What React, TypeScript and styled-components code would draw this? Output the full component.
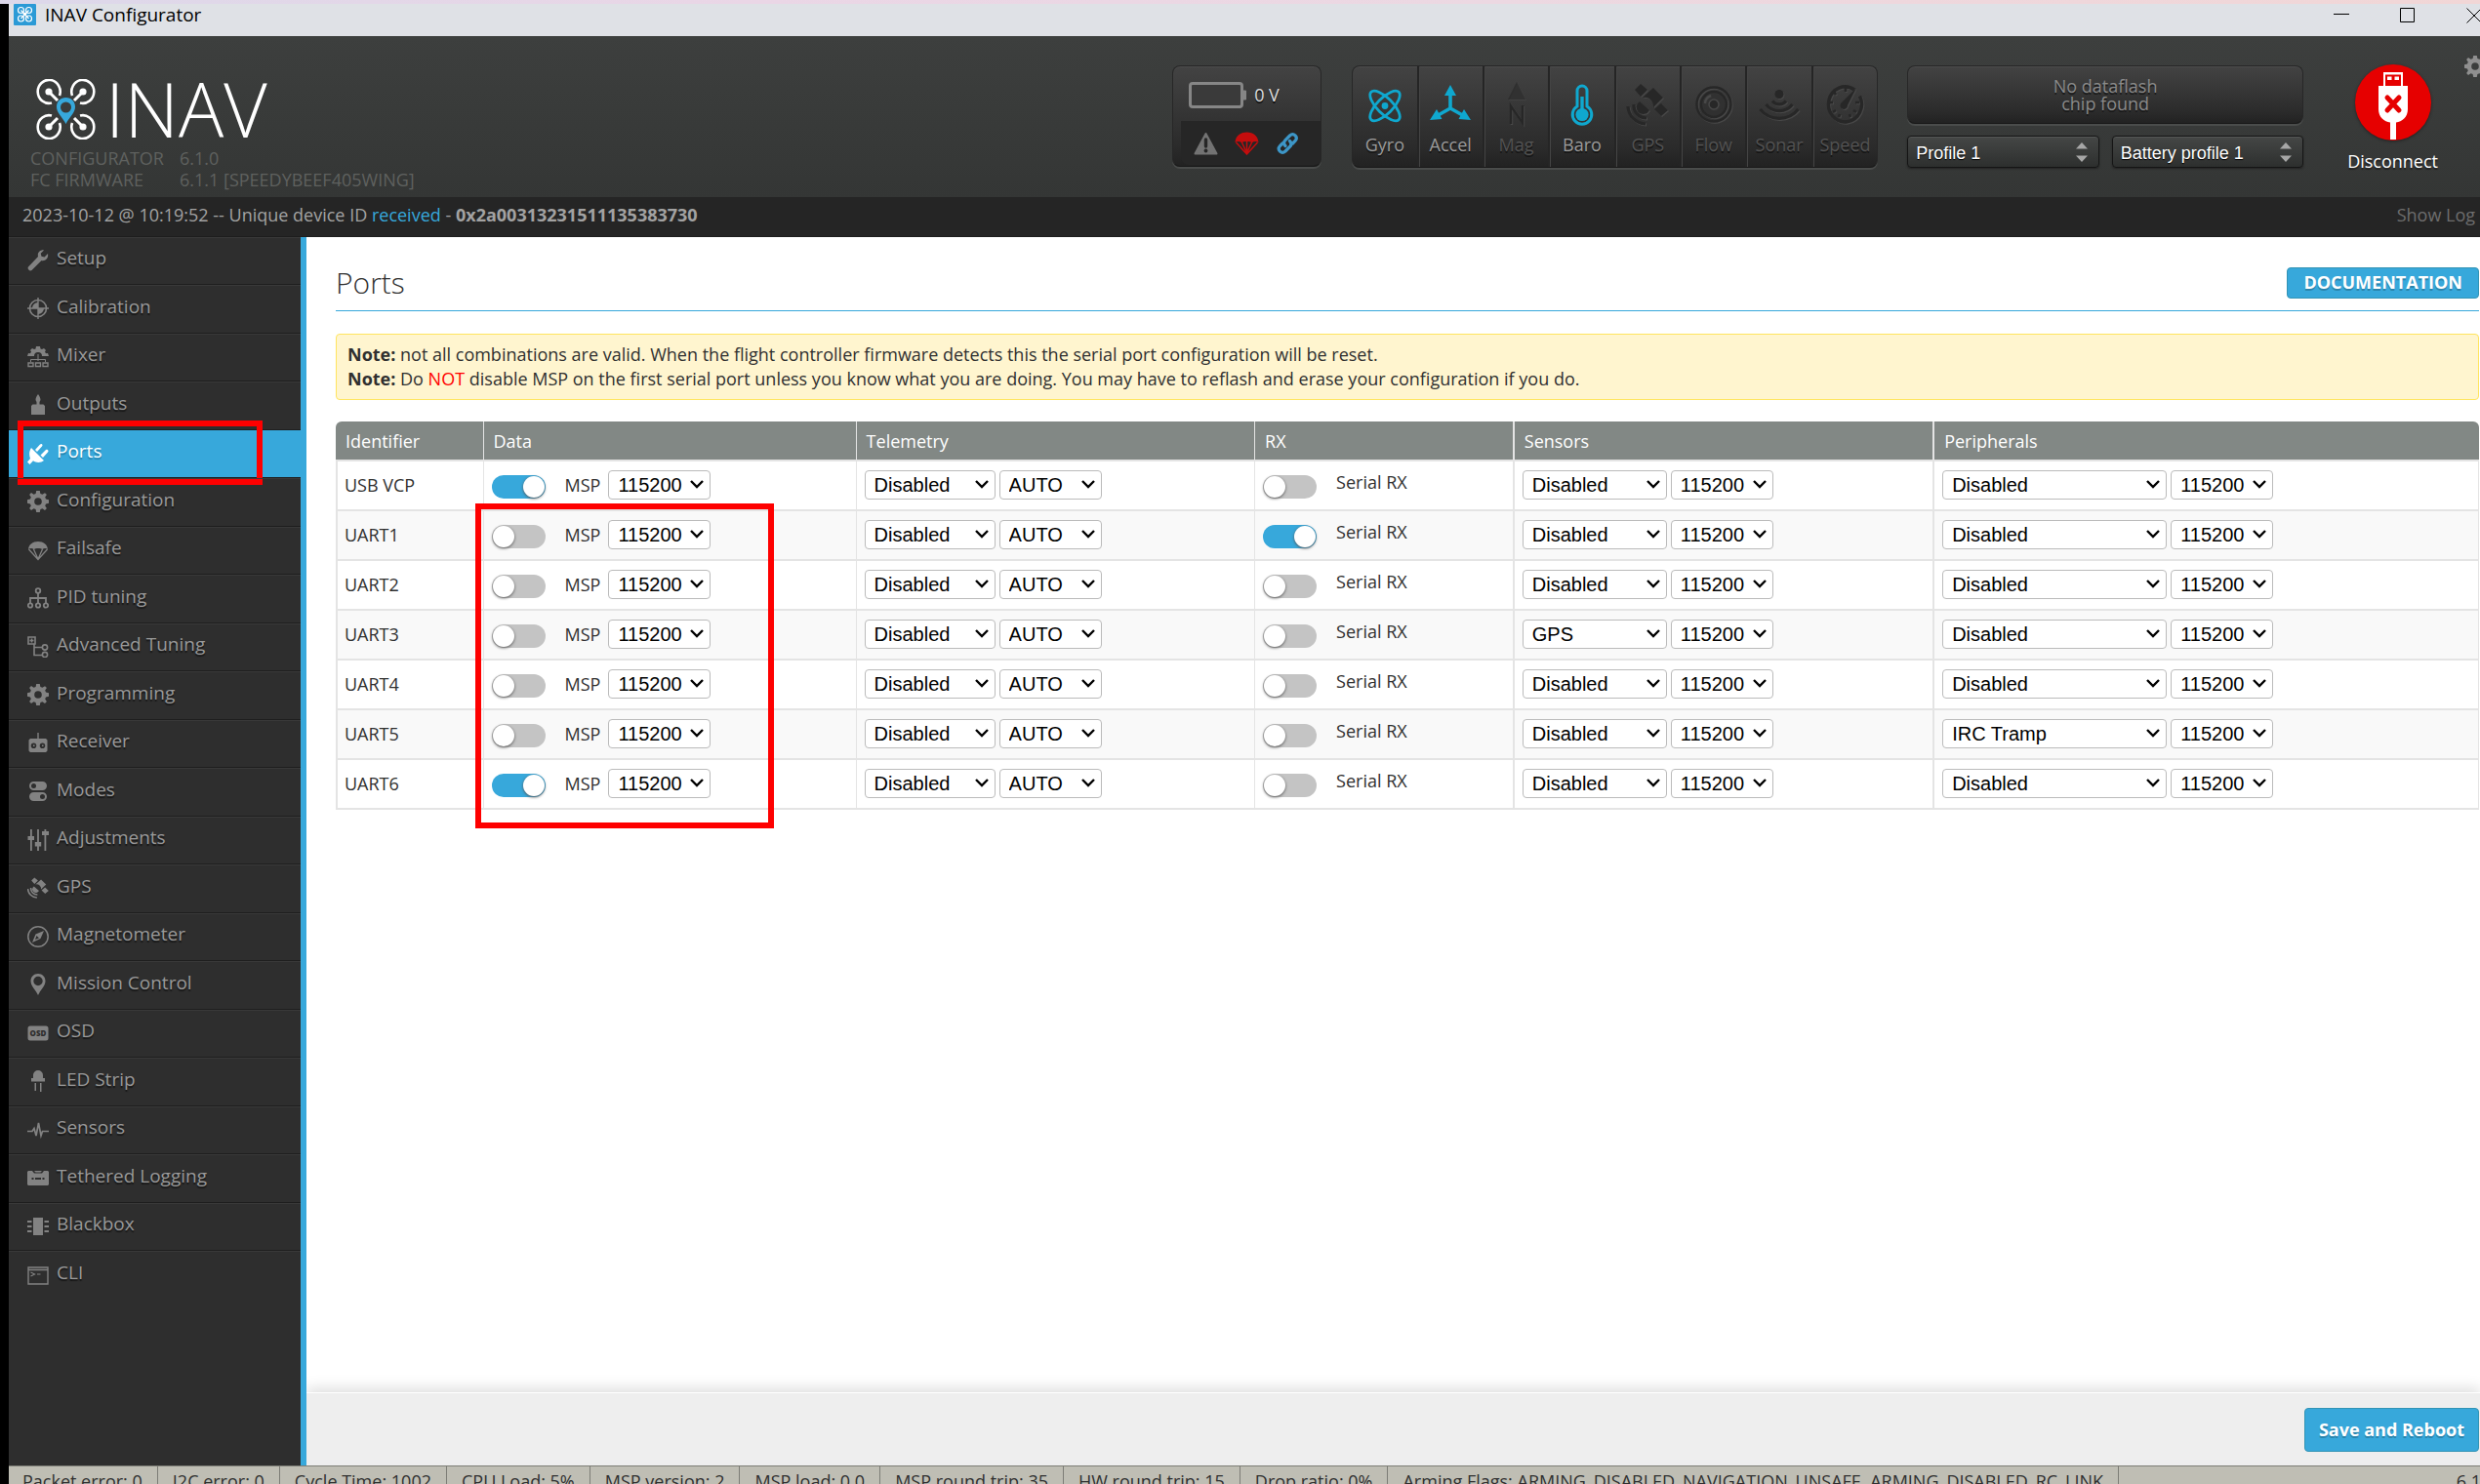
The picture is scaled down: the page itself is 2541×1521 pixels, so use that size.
import React from "react";
import styled, { createGlobalStyle, css } from "styled-components";

const BLUE = "#37a8db";
const UI_FONT = '"Open Sans", "Noto Sans", sans-serif';
const FORM_FONT = '"Liberation Sans", Arial, sans-serif';

const GlobalStyle = createGlobalStyle`
  * { box-sizing: border-box; }
  html, body { margin: 0; padding: 0; background: #000; }
  body { font-family: ${UI_FONT}; font-size: 18px; line-height: 24px; color: #303030; overflow: hidden; }
  button, input, select { margin: 0; font: inherit; }
  ul, dl, dd, h1, p { margin: 0; padding: 0; }
  ul { list-style: none; }
  a { color: inherit; text-decoration: none; }
`;

/* ---------- window frame ---------- */

const Shell = styled.div`
  display: flex;
  flex-direction: column;
  height: 100vh;
  overflow: hidden;
`;
const Wallpaper = styled.div`
  flex: none;
  height: 4px;
  background: linear-gradient(90deg, #dcd8ea, #ead6e6 30%, #ecd8e2 60%, #f1d6d6);
`;
const AppWindow = styled.div`
  flex: 1;
  min-height: 0;
  display: flex;
  flex-direction: column;
  margin-left: 9px;
`;
const TitleBar = styled.div`
  flex: none;
  display: flex;
  align-items: flex-start;
  height: 33px;
  margin-right: -28px;
  padding-left: 5px;
  background: #dfe1e6;
  color: #000;
`;
const AppBadge = styled.svg`
  width: 23px;
  height: 22px;
  margin-right: 9px;
`;
const WindowTitle = styled.span`
  flex: 1;
  font-size: 19px;
  line-height: 22px;
`;
const WindowButton = styled.button`
  display: flex;
  justify-content: center;
  width: 68px;
  padding: 3px 0 0;
  border: 0;
  background: none;
  svg { width: 18px; height: 18px; fill: none; stroke: #000; stroke-width: 1; }
`;

/* ---------- header ---------- */

const Header = styled.header`
  flex: none;
  display: flex;
  align-items: flex-start;
  background: linear-gradient(#3d3f3e, #343635);
`;
const Brand = styled.div`
  flex: 1;
  padding: 43px 0 7px 22px;
`;
const Logo = styled.div`
  display: flex;
  align-items: center;
  gap: 10px;
  height: 63px;
  padding-left: 6px;
  color: #fff;
  font-size: 77px;
  font-weight: 300;
  line-height: 62px;
  svg { width: 61px; height: 62px; }
`;
const Versions = styled.dl`
  display: grid;
  grid-template-columns: 153px auto;
  justify-content: start;
  margin-top: 8px;
  line-height: 22px;
  color: #5f615f;
`;
const panel = css`
  border: 1px solid #272727;
  border-bottom-color: #191919;
  border-radius: 8px;
  background: linear-gradient(#434343, #2b2b2b 80%, #222);
  box-shadow: 0 2px 0 #4a4c4b, inset 0 1px 0 #4b4b4b;
`;
const BatteryPanel = styled.section`
  ${panel}
  width: 153px;
  height: 104px;
  margin: 30px 31px 0 0;
  padding-left: 8px;
`;
const Voltage = styled.div`
  display: flex;
  align-items: center;
  gap: 8px;
  height: 56px;
  padding: 4px 0 0 8px;
  color: #ddd;
  text-shadow: 0 2px 0 #111;
  svg { width: 59px; height: 28px; }
  span { padding-bottom: 3px; }
`;
const StatusIcons = styled.div`
  display: flex;
  align-items: center;
  gap: 17px;
  height: 45px;
  padding-left: 13px;
  border-radius: 0 0 6px 8px;
  background: #262626;
  svg { width: 25px; height: 24px; }
`;
const SensorPanel = styled.ul`
  ${panel}
  display: flex;
  width: 539px;
  height: 105px;
  margin: 30px 30px 0 0;
`;
const SensorCell = styled.li<{ $on: boolean }>`
  flex: 1 1 0;
  display: flex;
  flex-direction: column;
  align-items: center;
  padding-top: 17px;
  color: ${(p) => (p.$on ? "#9a9a9a" : "#525252")};
  text-shadow: 0 2px 0 #161616;
  & + & { border-left: 2px solid #252525; box-shadow: inset 1px 0 0 #444; }
  svg {
    width: 42px;
    height: 44px;
    margin-bottom: 7px;
    overflow: visible;
    color: ${(p) => (p.$on ? "#0fa8cf" : "#272727")};
    filter: ${(p) => (p.$on ? "none" : "drop-shadow(1px 1px 0 #484848)")};
  }
`;
const Storage = styled.div`
  display: flex;
  flex-direction: column;
  gap: 12px;
  width: 406px;
  margin: 30px 45px 0 0;
`;
const Dataflash = styled.div`
  ${panel}
  display: flex;
  align-items: center;
  justify-content: center;
  height: 60px;
  color: #8a8a8a;
  line-height: 18px;
  text-align: center;
  text-shadow: 0 2px 0 #1a1a1a;
`;
const Profiles = styled.div`
  display: flex;
  gap: 13px;
`;
const ProfileSelect = styled.select`
  appearance: none;
  flex: 1;
  min-width: 0;
  height: 33px;
  padding: 2px 8px 0;
  border: 1px solid #151515;
  border-radius: 4px;
  background:
    url("data:image/svg+xml,%3Csvg xmlns='http://www.w3.org/2000/svg' width='12' height='22'%3E%3Cpath d='M0 7.500L6 1l6 6.500zM0 14.500h12L6 21z' fill='%23a6a6a6'/%3E%3C/svg%3E") right 11px center no-repeat,
    linear-gradient(#454746, #2d2f2e);
  box-shadow: 0 1px 2px #222, inset 0 1px 0 #565857;
  color: #fff;
  font-family: ${FORM_FONT};
  font-size: 18px;
  text-shadow: 0 1px 1px #000;
`;
const ConnectBox = styled.div`
  display: flex;
  flex-direction: column;
  align-items: center;
  gap: 9px;
  margin: 29px 27px 0 0;
  color: #fff;
  text-shadow: 0 2px 1px #222;
`;
const ConnectButton = styled.button`
  width: 78px;
  height: 78px;
  padding: 0;
  border: 0;
  border-radius: 50%;
  background: #e60000;
  box-shadow: 0 1px 3px #222;
  svg { display: block; width: 78px; height: 78px; }
`;
const GearButton = styled.button`
  width: 22px;
  height: 22px;
  margin: 20px -6px 0 0;
  padding: 0;
  border: 0;
  background: none;
  color: #8f8f8f;
  svg { display: block; width: 22px; height: 22px; }
`;

const LogBar = styled.div`
  flex: none;
  display: flex;
  justify-content: space-between;
  height: 41px;
  padding: 0 5px 0 14px;
  border-bottom: 1px solid #1d1d1d;
  background: #252525;
  color: #a2a2a2;
  line-height: 36px;
  em { color: ${BLUE}; font-style: normal; }
  a { color: #6d6d6d; }
`;

/* ---------- sidebar ---------- */

const Body = styled.div`
  flex: 1;
  min-height: 0;
  display: flex;
`;
const Sidebar = styled.nav`
  flex: none;
  width: 305px;
  border-right: 6px solid ${BLUE};
  background: #2e2e2e;
`;
const NavItem = styled.li<{ $active: boolean }>`
  position: relative;
  height: 49px;
  border-top: 1px solid #393939;
  border-bottom: 1px solid #1e1e1e;
  &:nth-child(even) { height: 50px; }
  &:last-child { border-bottom: 0; }
  ${(p) => p.$active && css`border-top-color: ${BLUE}; background: ${BLUE};`}
  a {
    display: flex;
    align-items: center;
    gap: 8px;
    height: 100%;
    padding: 0 0 2px 19px;
    color: ${(p) => (p.$active ? "#fff" : "#999")};
    font-size: 19px;
    text-shadow: 0 2px 1px ${(p) => (p.$active ? "#2580aa" : "#171717")};
  }
  svg { width: 22px; height: 22px; color: ${(p) => (p.$active ? "#fff" : "#828282")}; text-shadow: none; }
  span { padding-bottom: 5px; }
`;
const NavMark = styled.div`
  position: absolute;
  top: -11px;
  left: 9px;
  width: 251px;
  height: 66px;
  border: 6px solid #fe0000;
  pointer-events: none;
`;

/* ---------- content ---------- */

const Content = styled.main`
  flex: 1;
  min-width: 0;
  display: flex;
  flex-direction: column;
  overflow: hidden;
  background: #fff;
`;
const Page = styled.div`
  flex: 1;
  min-height: 0;
  padding: 31px 1px 0 30px;
`;
const TitleRow = styled.div`
  display: flex;
  align-items: center;
  justify-content: space-between;
  padding-bottom: 12px;
  border-bottom: 1px solid ${BLUE};
  h1 { font-size: 30px; font-weight: 300; line-height: 32px; }
`;
const DocLink = styled.a`
  height: 32px;
  padding: 0 16px;
  border: 1px solid #3394b5;
  border-radius: 4px;
  background: ${BLUE};
  color: #fff;
  font-weight: 700;
  line-height: 28px;
  text-shadow: 0 2px 0 #2a85ad;
`;
const Note = styled.div`
  margin-top: 23px;
  padding: 8px 11px;
  border: 1px solid #ffe55f;
  border-radius: 4px;
  background: #fff5cf;
  line-height: 25px;
  em { color: #f00; font-style: normal; }
`;
const TableBox = styled.div`
  position: relative;
  margin-top: 22px;
`;
const DataMark = styled.div`
  position: absolute;
  top: 84px;
  left: 143px;
  width: 306px;
  height: 333px;
  border: 6px solid #fe0000;
  pointer-events: none;
`;
const PortTable = styled.table`
  width: 100%;
  table-layout: fixed;
  border-collapse: separate;
  border-spacing: 0;
  th {
    height: 41px;
    padding: 0 10px;
    border-right: 1px solid #e4e4e4;
    border-bottom: 2px solid #e4e4e4;
    background: #828885;
    color: #fff;
    font-weight: 400;
    text-align: left;
  }
  th:first-child { border-top-left-radius: 6px; }
  th:last-child { border-top-right-radius: 6px; border-right: 0; }
  td {
    height: 51px;
    padding: 0 8px 2px;
    border-right: 1px solid #e4e4e4;
    border-bottom: 2px solid #e4e4e4;
  }
  td:first-child { padding-left: 7px; border-left: 2px solid #e4e4e4; }
  th:nth-child(4), th:nth-child(5), td:nth-child(4), td:nth-child(5) { border-right-width: 2px; }
  tbody tr:nth-child(even) { background: #f9f9f9; }
`;
const Col = styled.col<{ $w: string }>`
  width: ${(p) => p.$w};
`;
const CellRow = styled.div`
  display: flex;
  align-items: center;
  gap: 4px;
`;
const SwitchLabel = styled.label<{ $top?: boolean }>`
  display: flex;
  align-items: ${(p) => (p.$top ? "flex-start" : "center")};
  gap: 20px;
  padding-right: 4px;
`;
const Toggle = styled.input.attrs({ type: "checkbox" })`
  appearance: none;
  display: flex;
  align-items: center;
  width: 55px;
  height: 24px;
  margin-top: 5px;
  padding: 0 1px;
  border-radius: 12px;
  background: #c4c4c4;
  &::before {
    content: "";
    width: 22px;
    height: 22px;
    border-radius: 50%;
    background: #fff;
    box-shadow: 0 1px 3px #555;
  }
  &:checked { justify-content: flex-end; background: ${BLUE}; }
`;
const PortSelect = styled.select<{ $w: number }>`
  appearance: none;
  width: ${(p) => p.$w}px;
  height: 30px;
  padding: 0 9px;
  border: 1px solid #bbb;
  border-radius: 4px;
  background: #fff url("data:image/svg+xml,%3Csvg xmlns='http://www.w3.org/2000/svg' width='14' height='9'%3E%3Cpath d='M1 1l6 6 6-6' fill='none' stroke='black' stroke-width='2.400'/%3E%3C/svg%3E") right 6px center no-repeat;
  color: #000;
  font-family: ${FORM_FONT};
  font-size: 20px;
`;
const SaveBar = styled.div`
  flex: none;
  display: flex;
  justify-content: flex-end;
  height: 75px;
  padding: 15px 1px 0 0;
  border-top: 1px solid #fff;
  background: #eee;
  box-shadow: 0 -4px 14px #ddd;
`;
const SaveButton = styled.button`
  height: 45px;
  padding: 0 14px 2px;
  border: 1px solid #3394b5;
  border-radius: 4px;
  background: ${BLUE};
  color: #fff;
  font-weight: 700;
  text-shadow: 0 2px 0 #2a85ad;
`;

const StatusBar = styled.ul`
  flex: none;
  display: flex;
  height: 19px;
  overflow: hidden;
  border-top: 1px solid #7d7d76;
  background: #bfbeb4;
  line-height: 27px;
  white-space: nowrap;
  li { padding: 2px 15px 0; border-right: 1px solid #7d7d76; }
  li:first-child { padding-left: 14px; }
  li:last-child { margin: 0 -16px 0 auto; padding-right: 0; border: 0; }
`;

/* ---------- drawings ---------- */

const GEAR =
  "M9.200 0h3.600l.6 3 2 .8L18 2.200 19.900 4l-1.700 2.600.8 2 3 .6v3.600l-3 .6-.8 2 1.700 2.600-1.900 1.900-2.600-1.700-2 .8-.6 3H9.200l-.6-3-2-.8L4 19.900 2.100 18l1.700-2.600-.8-2-3-.6V9.200l3-.6.8-2L2.100 4 4 2.100l2.600 1.700 2-.8zM11 7.200a3.800 3.800 0 1 0 0 7.600 3.800 3.800 0 0 0 0-7.600z";

const Gear = () => (
  <svg viewBox="0 0 22 22"><path d={GEAR} fill="currentColor" fillRule="evenodd" /></svg>
);

const Satellite = () => (
  <g fill="currentColor">
    <path d="M8 7l6-6 7 6-7 7zM28 27l7-6 7 7-7 6z" />
    <path d="M16 15l11-10 10 10-10 10a9 9 0 0 0-11-10z" />
    <path d="M13 19a7 7 0 1 0 10 9z" />
    <path d="M7 22a13 13 0 0 0 13 14M1 24a19 19 0 0 0 18 18" fill="none" stroke="currentColor" strokeWidth="3.200" />
  </g>
);

const Drone = ({ pin }: { pin: string }) => (
  <svg viewBox="0 0 61 62" fill="none" stroke="#fff" strokeWidth="2.600">
    <path d="M24 17A11.500 12 0 1 0 16 24.500M37 17A11.500 12 0 1 1 45 24.500M24 45A11.500 12 0 1 1 16 37.500M37 45A11.500 12 0 1 0 45 37.500" />
    <path d="M13 13l9 9M48 13l-9 9M13 49l9-9M48 49l-9-9" strokeWidth="3" />
    <g fill="#fff" stroke="none">
      <circle cx="13" cy="13" r="3.600" /><circle cx="48" cy="13" r="3.600" />
      <circle cx="13" cy="49" r="3.600" /><circle cx="48" cy="49" r="3.600" />
    </g>
    <path d="M30.500 19c-5.500 0-9.500 4-9.500 9.500 0 6 5.500 10 9.500 17.500 4-7.500 9.500-11.500 9.500-17.500 0-5.500-4-9.500-9.500-9.500zm0 4.500a5.500 5.500 0 1 1 0 11 5.500 5.500 0 0 1 0-11z" fill={pin} stroke="none" fillRule="evenodd" />
  </svg>
);

const navIcons: Record<string, React.ReactNode> = {
  Setup: (
    <path d="M21 4l-3.500 3.500-3-.8-.8-3L17 .4C13 0 10 3 11 7L1 17.500C-.5 19.500 2.500 22.500 4.500 21L14.500 11c4 1 7.500-2.500 6.500-7z" />
  ),
  Calibration: (
    <>
      <circle cx="11" cy="11" r="8.500" fill="none" stroke="currentColor" strokeWidth="1.600" />
      <path d="M10.300 0h1.400v22h-1.400zM0 10.300h22v1.400H0z" />
      <path d="M11 5a6 6 0 0 0-6 6h6zM11 17a6 6 0 0 0 6-6h-6z" />
    </>
  ),
  Mixer: (
    <>
      <path d="M0 10l1-3 2 .2 1-1.700L3 4l2-2 2 1 1.500-.6L9 0h4l.5 2.400L15 3l2-1 2 2-1 1.500 1 1.700 2-.2 1 3h-7a4 4 0 0 0-8 0z" />
      <path d="M11 8v7M3.500 16v-2.500h15V16" fill="none" stroke="currentColor" />
      <path d="M1 17h5v3.500H1zM8.500 17h5v3.500h-5zM16 17h5v3.500h-5z" fill="none" stroke="currentColor" strokeWidth="1.400" />
    </>
  ),
  Outputs: <path d="M11 0c1.500 2 2.500 4 2.500 6L12.500 8v2.500h4L18 12v9H4v-9l1.500-1.500h4V8l-1-2C8.500 4 9.500 2 11 0z" />,
  Ports: (
    <path d="M4 5l13 13c-3 2.500-8 2.500-11 .3L2.500 22 0 19.500 3 16C1.500 12 2 8 4 5zM8 7l5-5.500c1.500-1.500 3.500.5 2 2L10 9zM13.500 12.500L19 7c1.500-1 3.500.8 2 2.500L16 15z" />
  ),
  Configuration: <path d={GEAR} fillRule="evenodd" />,
  Failsafe: (
    <>
      <path d="M1 10C1.500 5 5.500 2 11 2s9.500 3 10 8c-2-1.500-4-1.500-5.500 0-1.500-1.500-7-1.500-9 0C5 8.500 3 8.500 1 10z" />
      <path d="M1.500 10L11 20.500 20.500 10M6.500 10L11 20l4.500-10" fill="none" stroke="currentColor" strokeWidth="1.300" />
    </>
  ),
  "PID tuning": (
    <g fill="none" stroke="currentColor" strokeWidth="1.800">
      <circle cx="11" cy="3.500" r="2.300" /><circle cx="3" cy="18.500" r="2.200" />
      <circle cx="11" cy="18.500" r="2.200" /><circle cx="19" cy="18.500" r="2.200" />
      <path d="M11 6v10M3 16v-5h16v5" />
    </g>
  ),
  "Advanced Tuning": (
    <g fill="none" stroke="currentColor" strokeWidth="1.600">
      <path d="M1 1h7v7H1zM4.500 2.500v4M2.500 4.500h4M7 8v11.500h8M7 11.500h8" />
      <circle cx="18" cy="11.500" r="2.600" /><circle cx="18" cy="19" r="2.600" />
    </g>
  ),
  Programming: <path d={GEAR} fillRule="evenodd" />,
  Receiver: (
    <path fillRule="evenodd" d="M10.300 0h1.400v6H19l1.500 1.500v11L19 20H3l-1.500-1.500v-11L3 6h7.300zM6.500 10.500a2.800 2.800 0 1 0 0 5.600 2.800 2.800 0 0 0 0-5.600zm9 0a2.800 2.800 0 1 0 0 5.600 2.800 2.800 0 0 0 0-5.600zM6 12.500h1.500v1.500H6zM15 12.500h1.500v1.500H15z" />
  ),
  Modes: (
    <path fillRule="evenodd" d="M6.500 1h9a4.500 4.500 0 0 1 0 9h-9a4.500 4.500 0 0 1 0-9zm0 2a2.500 2.500 0 1 0 0 5 2.500 2.500 0 0 0 0-5zM6.500 12h9a4.500 4.500 0 0 1 0 9h-9a4.500 4.500 0 0 1 0-9zm9 2a2.500 2.500 0 1 0 0 5 2.500 2.500 0 0 0 0-5z" />
  ),
  Adjustments: (
    <path d="M3 0h1.800v7H7v4H4.800v11H3V11H0.500V7H3zM10.100 0h1.800v13h2.300v4.500h-2.300V22h-1.800v-4.500H7.800V13h2.300zM17.500 0h1.800v2H22v4h-2.700v16h-1.800V6H15V2h2.500z" />
  ),
  GPS: <g transform="scale(.52 .5)"><Satellite /></g>,
  Magnetometer: (
    <>
      <circle cx="11" cy="11" r="10.200" fill="none" stroke="currentColor" strokeWidth="1.500" />
      <path fillRule="evenodd" d="M17 5l-3.500 8L5 17l3.500-8.500zM9.500 10L8 14l4-1.500z" />
    </>
  ),
  "Mission Control": (
    <path fillRule="evenodd" d="M11 0c-4.500 0-7.500 3.200-7.500 7.500 0 5 5 9 7.500 14.500 2.500-5.500 7.500-9.500 7.500-14.500C18.500 3.200 15.500 0 11 0zm0 2.800a4.700 4.700 0 1 1 0 9.400 4.700 4.700 0 0 1 0-9.400z" />
  ),
  OSD: (
    <>
      <rect x="0.500" y="3.500" width="21" height="15" rx="2.500" />
      <text x="11" y="14" textAnchor="middle" fontSize="8" fontWeight="800" fill="#2e2e2e">OSD</text>
    </>
  ),
  "LED Strip": (
    <path d="M6 8V5a5 5 0 0 1 10 0v3h2v3.500H4V8zM7.500 13H9v8H7.500zM13 13h1.500v9H13z" />
  ),
  Sensors: (
    <path d="M0 12.500h5l2-3 2 7.500 2.500-13L14 17l1.500-4.500H22" fill="none" stroke="currentColor" strokeWidth="1.700" />
  ),
  "Tethered Logging": (
    <path fillRule="evenodd" d="M1 4h4l2 2.500h8L17 4h4l1 1v13l-1 1H1l-1-1V5zM7 4h8l-1.500 1.500h-5zM4.500 11v2h2v-2zM8 11v2h6v-2zM15.500 11v2h2v-2z" />
  ),
  Blackbox: (
    <path d="M6 2h10v18H6zM0 5h4.500v2H0zM0 10h4.500v2H0zM0 15h4.500v2H0zM17.500 5H22v2h-4.500zM17.500 10H22v2h-4.500zM17.500 15H22v2h-4.500z" />
  ),
  CLI: (
    <>
      <path d="M1 3h20v17H1zM1 5.500h20" fill="none" stroke="currentColor" strokeWidth="1.400" />
      <path d="M3.500 8l4 2-4 2M10 10h3.500" fill="none" stroke="currentColor" strokeWidth="1.200" />
    </>
  ),
};

const sensors: { name: string; on: boolean; art: React.ReactNode }[] = [
  {
    name: "Gyro",
    on: true,
    art: (
      <g fill="none" stroke="currentColor" strokeWidth="2.800">
        <ellipse cx="21" cy="23.500" rx="20" ry="8" transform="rotate(45 21 23.500)" />
        <ellipse cx="21" cy="23.500" rx="20" ry="8" transform="rotate(-45 21 23.500)" />
        <circle cx="21" cy="23.500" r="3.400" fill="currentColor" stroke="none" />
      </g>
    ),
  },
  {
    name: "Accel",
    on: true,
    art: (
      <>
        <path d="M21 6v20M21 26L5 35M21 26l16 9" stroke="currentColor" strokeWidth="3.600" />
        <path d="M21 2l6 11H15zM0 38l7-11 5.500 10zM42 38l-7-11-5.500 10z" fill="currentColor" />
      </>
    ),
  },
  {
    name: "Mag",
    on: false,
    art: (
      <>
        <path d="M21-1l9 18H12z" fill="currentColor" fillOpacity=".6" />
        <path d="M15 42V23.500L27 41V23" fill="none" stroke="currentColor" strokeWidth="2.400" />
      </>
    ),
  },
  {
    name: "Baro",
    on: true,
    art: (
      <>
        <path d="M16 24V8a5 5 0 0 1 10 0v16a9.800 9.800 0 1 1-10 0z" fill="none" stroke="currentColor" strokeWidth="3" />
        <circle cx="21" cy="32.500" r="6.600" fill="currentColor" />
        <path d="M21 14v14" stroke="currentColor" strokeWidth="3.400" />
      </>
    ),
  },
  { name: "GPS", on: false, art: <Satellite /> },
  {
    name: "Flow",
    on: false,
    art: (
      <g fill="none" stroke="currentColor" strokeWidth="2.400">
        <circle cx="21" cy="22" r="17.500" /><circle cx="21" cy="22" r="13" fill="currentColor" fillOpacity=".6" />
        <circle cx="21" cy="22" r="5" fill="currentColor" stroke="#484848" strokeWidth="1.500" />
        <path d="M12 21a9 9 0 0 1 6-8" stroke="#484848" />
      </g>
    ),
  },
  {
    name: "Sonar",
    on: false,
    art: (
      <>
        <circle cx="21" cy="11.500" r="4.500" fill="currentColor" />
        <path d="M14 18.500a9 9 0 0 0 14 0M7.500 22a17 17 0 0 0 27 0M1.500 27a25 25 0 0 0 39 0" fill="none" stroke="currentColor" strokeWidth="3.200" />
      </>
    ),
  },
  {
    name: "Speed",
    on: false,
    art: (
      <>
        <path d="M31 7A17 18 0 1 0 36.500 13.500" fill="none" stroke="currentColor" strokeWidth="3.400" />
        <path d="M22 5v4M10 9l2 3M5 20h4M9 30l3-2M15 35l1-3M27 35l-1-3M33 30l-3-2M36 20h-4" stroke="currentColor" strokeWidth="2.600" />
        <path d="M33 5L24 23a3.800 3.800 0 1 1-6-3z" fill="currentColor" />
      </>
    ),
  },
];

/* ---------- data ---------- */

const navItems = Object.keys(navIcons);

type Port = { id: string; msp: boolean; rx: boolean; sensor: string; peripheral: string };
const ports: Port[] = [
  { id: "USB VCP", msp: true, rx: false, sensor: "Disabled", peripheral: "Disabled" },
  { id: "UART1", msp: false, rx: true, sensor: "Disabled", peripheral: "Disabled" },
  { id: "UART2", msp: false, rx: false, sensor: "Disabled", peripheral: "Disabled" },
  { id: "UART3", msp: false, rx: false, sensor: "GPS", peripheral: "Disabled" },
  { id: "UART4", msp: false, rx: false, sensor: "Disabled", peripheral: "Disabled" },
  { id: "UART5", msp: false, rx: false, sensor: "Disabled", peripheral: "IRC Tramp" },
  { id: "UART6", msp: true, rx: false, sensor: "Disabled", peripheral: "Disabled" },
];

const statusItems = [
  "Packet error: 0",
  "I2C error: 0",
  "Cycle Time: 1002",
  "CPU Load: 5%",
  "MSP version: 2",
  "MSP load: 0.0",
  "MSP round trip: 35",
  "HW round trip: 15",
  "Drop ratio: 0%",
  "Arming Flags: ARMING_DISABLED_NAVIGATION_UNSAFE, ARMING_DISABLED_RC_LINK",
  "6.1.0",
];

const Choice = ({ value, width, label }: { value: string; width: number; label: string }) => (
  <PortSelect $w={width} aria-label={label} defaultValue={value}>
    <option>{value}</option>
  </PortSelect>
);

const PortRow = ({ port }: { port: Port }) => (
  <tr>
    <td>{port.id}</td>
    <td>
      <CellRow>
        <SwitchLabel><Toggle defaultChecked={port.msp} />MSP</SwitchLabel>
        <Choice value="115200" width={105} label={`${port.id} MSP baud rate`} />
      </CellRow>
    </td>
    <td>
      <CellRow>
        <Choice value="Disabled" width={134} label={`${port.id} telemetry`} />
        <Choice value="AUTO" width={105} label={`${port.id} telemetry baud rate`} />
      </CellRow>
    </td>
    <td>
      <SwitchLabel $top><Toggle defaultChecked={port.rx} />Serial RX</SwitchLabel>
    </td>
    <td>
      <CellRow>
        <Choice value={port.sensor} width={148} label={`${port.id} sensor`} />
        <Choice value="115200" width={105} label={`${port.id} sensor baud rate`} />
      </CellRow>
    </td>
    <td>
      <CellRow>
        <Choice value={port.peripheral} width={230} label={`${port.id} peripheral`} />
        <Choice value="115200" width={105} label={`${port.id} peripheral baud rate`} />
      </CellRow>
    </td>
  </tr>
);

const TopHeader = () => (
  <Header>
    <Brand>
      <Logo><Drone pin={BLUE} />INAV</Logo>
      <Versions>
        <dt>CONFIGURATOR</dt><dd>6.1.0</dd>
        <dt>FC FIRMWARE</dt><dd>6.1.1 [SPEEDYBEEF405WING]</dd>
      </Versions>
    </Brand>
    <BatteryPanel>
      <Voltage>
        <svg viewBox="0 0 59 28">
          <rect x="1.500" y="1.500" width="53" height="24" rx="2.500" fill="#3a3a3a" stroke="#868686" strokeWidth="3" />
          <path d="M56 9h2.500v9H56z" fill="#868686" stroke="#868686" />
        </svg>
        <span>0 V</span>
      </Voltage>
      <StatusIcons>
        <svg viewBox="0 0 25 24">
          <path d="M12.500 2L23.500 22.500h-22z" fill="#737373" stroke="#737373" strokeWidth="2" strokeLinejoin="round" />
          <path d="M12.500 8v7" stroke="#262626" strokeWidth="3.400" strokeLinecap="round" /><circle cx="12.500" cy="19.500" r="1.900" fill="#262626" />
        </svg>
        <svg viewBox="0 0 25 24" fill="#c40d0d">
          <path d="M.5 11C1 4.500 6 .5 12.500 .5S24 4.500 24.500 11c-2.500-1.500-4.500-1.500-6.500 0-3-1.500-8-1.500-11 0-2-1.500-4-1.500-6.500 0z" />
          <path d="M1.500 11l11 12 11-12M7 10l5.500 12L18 10M12.500 10v12" fill="none" stroke="#c40d0d" strokeWidth="1.500" />
        </svg>
        <svg viewBox="0 0 25 24" fill="none" stroke="#3d96c7" strokeWidth="3.200" strokeLinecap="round">
          <path d="M10 14.500c-2-2-1.800-4 0-6l4.500-4.500c4-3.500 9 1.500 5.500 5.500l-2.500 2.500" />
          <path d="M14.500 9.500c2 2 1.800 4 0 6L10 20c-4 3.500-9-1.500-5.500-5.500L7 12" />
        </svg>
      </StatusIcons>
    </BatteryPanel>
    <SensorPanel>
      {sensors.map((s) => (
        <SensorCell key={s.name} $on={s.on}>
          <svg viewBox="0 0 42 44">{s.art}</svg>
          {s.name}
        </SensorCell>
      ))}
    </SensorPanel>
    <Storage>
      <Dataflash>No dataflash<br />chip found</Dataflash>
      <Profiles>
        <ProfileSelect aria-label="Profile"><option>Profile 1</option></ProfileSelect>
        <ProfileSelect aria-label="Battery profile"><option>Battery profile 1</option></ProfileSelect>
      </Profiles>
    </Storage>
    <ConnectBox>
      <ConnectButton aria-labelledby="connect-label">
        <svg viewBox="0 0 78 78">
          <path d="M29 8h20v15H29z" fill="#fff" />
          <path d="M31 10.500h16V22H31z" fill="#e60000" />
          <path d="M33 12.500h4.500V16H33zM40.500 12.500H45V16h-4.500z" fill="#fff" />
          <path d="M24 22h30v24c0 8-6 13-12 13.500V77h-6V59.500C30 59 24 54 24 46z" fill="#fff" />
          <path d="M33 34l12 13M45 34L33 47" stroke="#e60000" strokeWidth="5" strokeLinecap="round" />
        </svg>
      </ConnectButton>
      <span id="connect-label">Disconnect</span>
    </ConnectBox>
    <GearButton aria-label="Options"><Gear /></GearButton>
  </Header>
);

export default function App() {
  return (
    <Shell>
      <GlobalStyle />
      <Wallpaper />
      <AppWindow>
        <TitleBar>
          <AppBadge viewBox="0 0 23 22">
            <rect width="23" height="22" rx="1" fill="#2b9ad6" />
            <g fill="none" stroke="#fff" strokeWidth="1.200">
              <circle cx="7.500" cy="6.500" r="3" /><circle cx="15.500" cy="6.500" r="3" />
              <circle cx="7.500" cy="15" r="3" /><circle cx="15.500" cy="15" r="3" />
              <path d="M7.500 6.500l8 8.500M15.500 6.500l-8 8.500" />
            </g>
            <circle cx="11.500" cy="10.500" r="1.800" fill="#fff" />
          </AppBadge>
          <WindowTitle>INAV Configurator</WindowTitle>
          <WindowButton aria-label="Minimize"><svg viewBox="0 0 18 18"><path d="M1 7.500h16" /></svg></WindowButton>
          <WindowButton aria-label="Maximize"><svg viewBox="0 0 18 18"><path d="M1.500 1.500h14v14h-14z" /></svg></WindowButton>
          <WindowButton aria-label="Close"><svg viewBox="0 0 18 18"><path d="M1.500 1.500l15 15M16.500 1.500l-15 15" /></svg></WindowButton>
        </TitleBar>
        <TopHeader />
        <LogBar>
          <p>2023-10-12 @ 10:19:52 -- Unique device ID <em>received</em> - <b>0x2a00313231511135383730</b></p>
          <a href="#log">Show Log</a>
        </LogBar>
        <Body>
          <Sidebar>
            <ul>
              {navItems.map((name) => (
                <NavItem key={name} $active={name === "Ports"}>
                  <a href={`#${name}`}>
                    <svg viewBox="0 0 22 22" fill="currentColor">{navIcons[name]}</svg>
                    <span>{name}</span>
                  </a>
                  {name === "Ports" && <NavMark />}
                </NavItem>
              ))}
            </ul>
          </Sidebar>
          <Content>
            <Page>
              <TitleRow>
                <h1>Ports</h1>
                <DocLink href="#docs">DOCUMENTATION</DocLink>
              </TitleRow>
              <Note>
                <p><b>Note:</b> not all combinations are valid. When the flight controller firmware detects this the serial port configuration will be reset.</p>
                <p><b>Note:</b> Do <em>NOT</em> disable MSP on the first serial port unless you know what you are doing. You may have to reflash and erase your configuration if you do.</p>
              </Note>
              <TableBox>
                <PortTable>
                  <colgroup>
                    <Col $w="6.9%" /><Col $w="17.4%" /><Col $w="18.6%" />
                    <Col $w="12.1%" /><Col $w="19.6%" /><Col $w="25.4%" />
                  </colgroup>
                  <thead>
                    <tr>
                      <th>Identifier</th><th>Data</th><th>Telemetry</th>
                      <th>RX</th><th>Sensors</th><th>Peripherals</th>
                    </tr>
                  </thead>
                  <tbody>
                    {ports.map((p) => <PortRow key={p.id} port={p} />)}
                  </tbody>
                </PortTable>
                <DataMark />
              </TableBox>
            </Page>
            <SaveBar><SaveButton>Save and Reboot</SaveButton></SaveBar>
          </Content>
        </Body>
        <StatusBar>
          {statusItems.map((s) => <li key={s}>{s}</li>)}
        </StatusBar>
      </AppWindow>
    </Shell>
  );
}
